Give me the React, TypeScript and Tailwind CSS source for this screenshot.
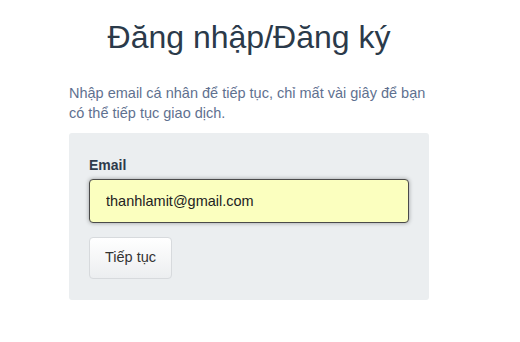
export default function App() {
  return (
    <div className="min-h-[342px] bg-white font-['Liberation_Sans',Arial,sans-serif]">
      <div className="ml-[69px] w-[360px] pt-[17px]">
        <h1 className="text-center text-[32px] leading-[40px] text-[#2b3a4a]">Đăng nhập/Đăng ký</h1>

        <p className="mt-[26px] text-[14.5px] leading-[20px] text-[#5f7190]">
          Nhập email cá nhân để tiếp tục, chỉ mất vài giây để bạn có thể tiếp tục giao dịch.
        </p>

        <div className="mt-[10px] rounded-[3px] bg-[#ebeef0] px-5 pt-[22px] pb-[21px]">
          <label className="block text-[14px] font-bold leading-[20px] text-[#2e3a4b]">Email</label>
          <input
            className="mt-[4px] block h-[44px] w-full rounded-[4px] border border-[#4a4a4a] bg-[#fbffbf] px-4 text-[14.5px] text-[#222] shadow-[0_0_4px_rgba(0,0,0,0.35)] outline-none"
            defaultValue="thanhlamit@gmail.com"
          />
          <button className="mt-[14px] h-[42px] w-[83px] rounded-[4px] border border-[#d7dadd] bg-gradient-to-b from-white to-[#eceef0] text-[14.5px] text-[#333]">
            Tiếp tục
          </button>
        </div>
      </div>
    </div>
  );
}
